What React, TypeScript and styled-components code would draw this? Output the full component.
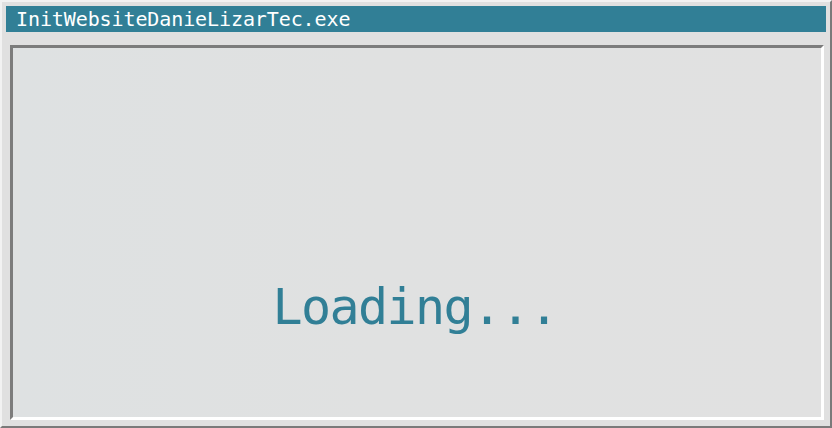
import React from 'react';
import styled, { createGlobalStyle } from 'styled-components';

const GlobalStyle = createGlobalStyle`
  html, body {
    margin: 0;
    padding: 0;
    background: #dcdcdc;
    overflow: hidden;
  }
  * {
    box-sizing: border-box;
  }
`;

const Window = styled.div`
  width: 832px;
  height: 428px;
  display: flex;
  flex-direction: column;
  padding: 4px;
  background: #e0e0e0;
  border-style: solid;
  border-width: 2px;
  border-color: #f2f2f2 #7a7a7a #7a7a7a #f2f2f2;
  font-family: 'DejaVu Sans Mono', 'Liberation Mono', monospace;
`;

const TitleBar = styled.div`
  height: 26px;
  flex-shrink: 0;
  display: flex;
  align-items: center;
  padding-left: 10px;
  background: #317f96;
  color: #ffffff;
  font-size: 20px;
  line-height: 26px;
  letter-spacing: -0.1px;
  white-space: nowrap;
`;

const Screen = styled.div`
  flex: 1;
  margin: 13px 2px 2px 4px;
  display: flex;
  flex-direction: column;
  align-items: center;
  padding-top: 234px;
  background: linear-gradient(90deg, #dee1e2 0%, #e0e1e1 45%, #e1e1e1 100%);
  border-style: solid;
  border-width: 3px;
  border-color: #7c7c7c #ffffff #ffffff #7c7c7c;
`;

const LoadingText = styled.div`
  color: #317f96;
  font-size: 50px;
  line-height: 50px;
  letter-spacing: -1.6px;
  margin-left: -4px;
`;

export default function App() {
  return (
    <>
      <GlobalStyle />
      <Window>
        <TitleBar>InitWebsiteDanieLizarTec.exe</TitleBar>
        <Screen>
          <LoadingText>Loading...</LoadingText>
        </Screen>
      </Window>
    </>
  );
}
